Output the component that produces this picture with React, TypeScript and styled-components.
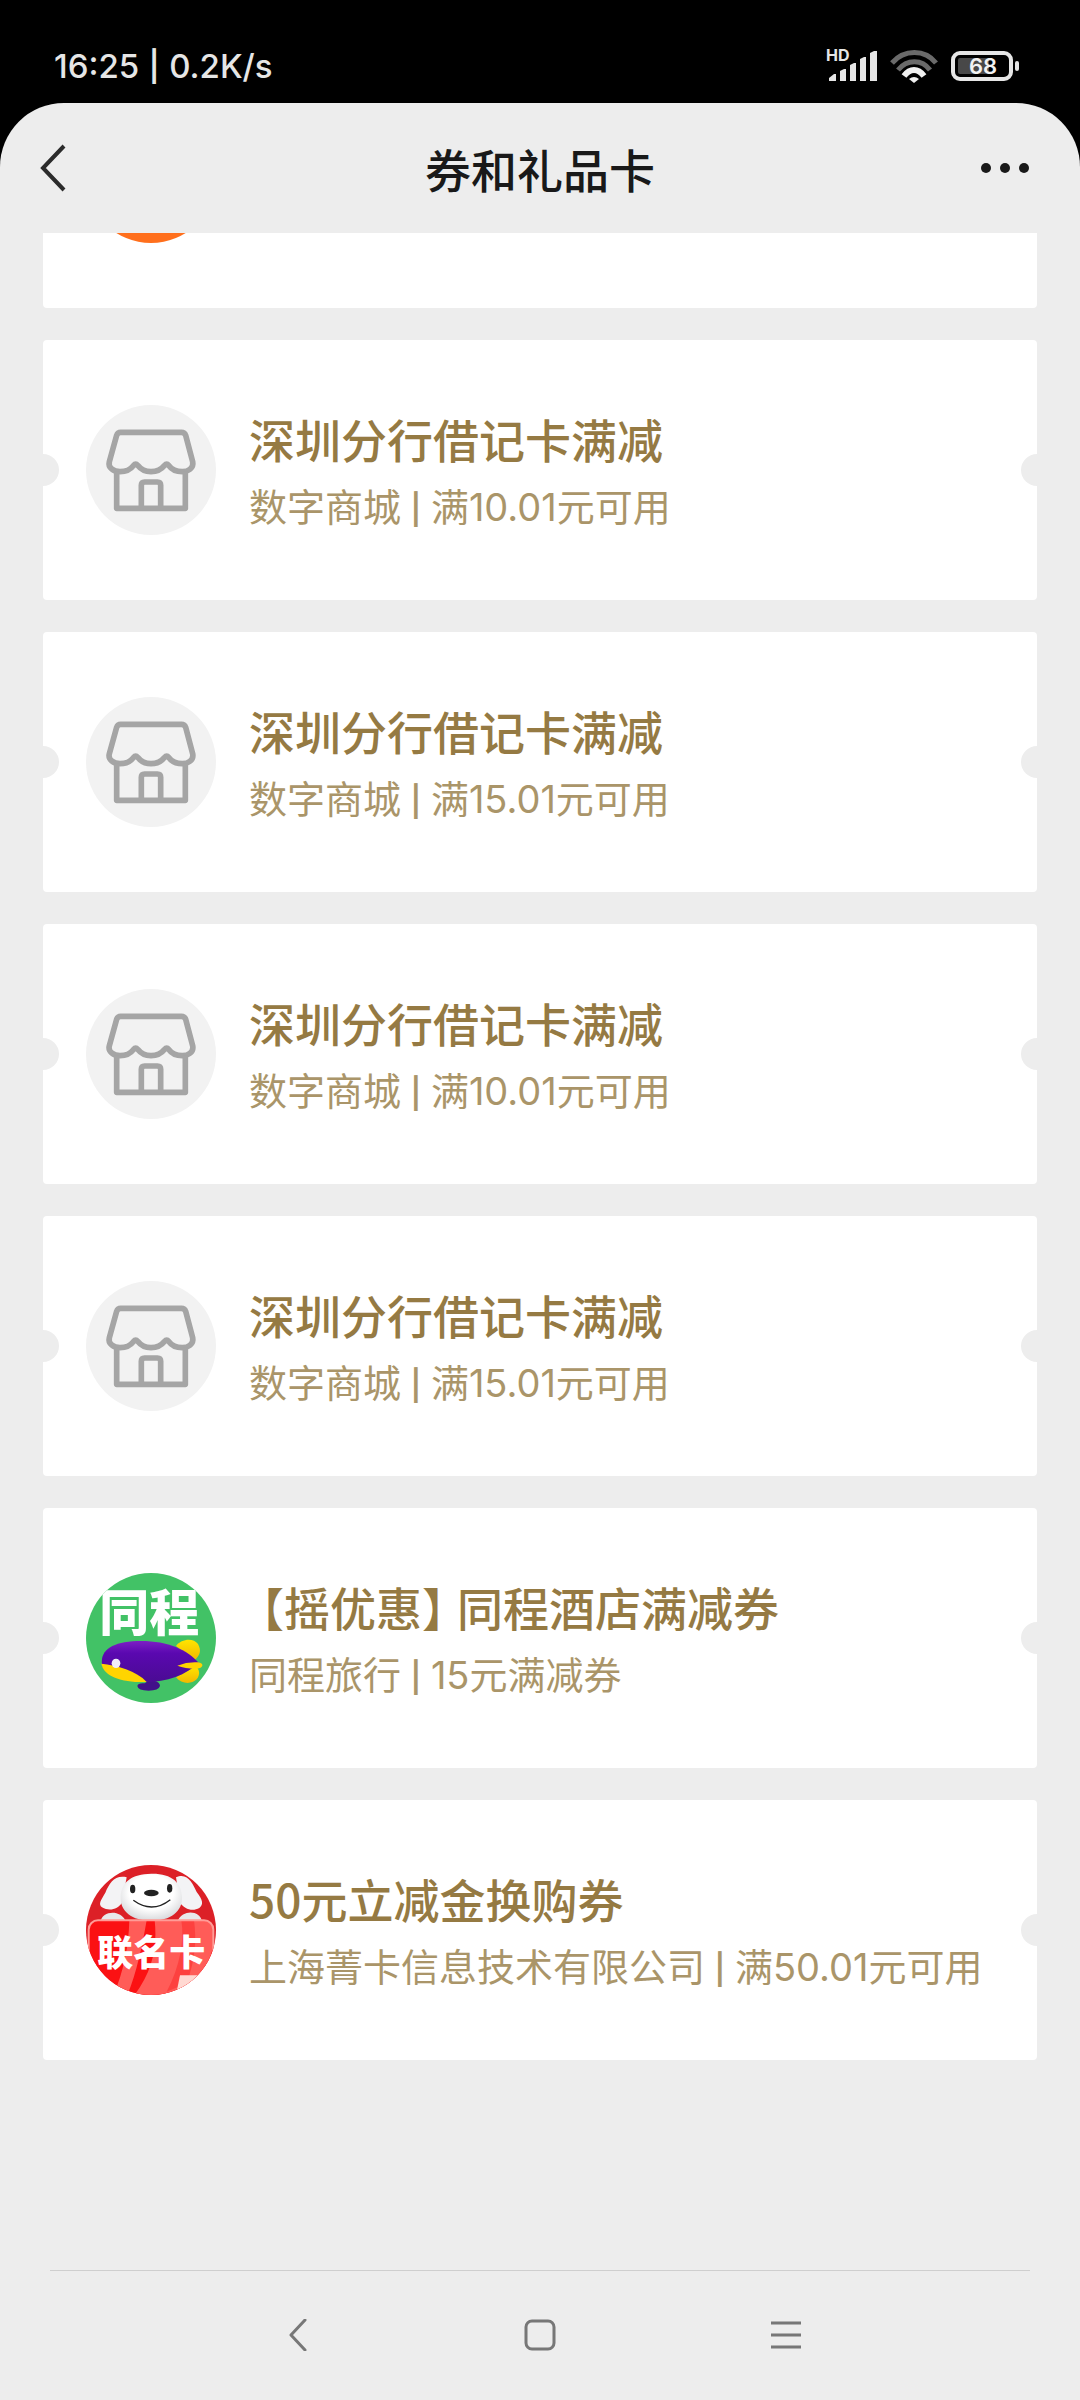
import React from "react";
import styled, { createGlobalStyle } from "styled-components";

const GlobalStyle = createGlobalStyle`
  * { box-sizing: border-box; }
  html, body { margin: 0; padding: 0; background: #000; }
  body { font-family: Inter, "Noto Sans CJK SC", sans-serif; }
  h1, h2, p, ul { margin: 0; padding: 0; }
  button { border: 0; padding: 0; background: none; font: inherit; color: inherit; cursor: pointer; }
`;

const Screen = styled.div`
  min-height: 100vh;
  display: flex;
  flex-direction: column;
  background: #000;
`;

const StatusBar = styled.div`
  height: 103px;
  padding: 29px 60px 0 54px;
  display: flex;
  align-items: center;
  justify-content: space-between;
  color: #e6e6e6;
  font-size: 33px;
  font-weight: 500;
`;

const StatusIcons = styled.div`
  display: flex;
  align-items: center;
  gap: 13px;
`;

const Pipe = styled.span`
  padding: 0 2px;
  font-size: 30px;
  font-weight: 600;
  vertical-align: 1px;
  white-space: pre;
`;

const Sheet = styled.div`
  flex: 1;
  display: flex;
  flex-direction: column;
  background: #ededed;
  border-radius: 64px 64px 0 0;
`;

const Header = styled.header`
  height: 130px;
  padding: 0 36px;
  display: grid;
  grid-template-columns: 100px 1fr 100px;
  align-items: center;
`;

const HeaderTitle = styled.h1`
  text-align: center;
  color: #191919;
  font-family: "Noto Sans CJK SC", sans-serif;
  font-size: 46px;
  line-height: 58px;
  font-weight: 500;
`;

const HeaderButton = styled.button<{ $end?: boolean }>`
  height: 64px;
  display: flex;
  align-items: center;
  justify-content: ${(p) => (p.$end ? "flex-end" : "flex-start")};
`;

const CardList = styled.ul`
  list-style: none;
  padding: 0 43px;
  display: flex;
  flex-direction: column;
  gap: 32px;
  overflow: hidden;
`;

const Card = styled.li<{ $scrolled?: boolean }>`
  position: relative;
  height: 260px;
  margin-top: ${(p) => (p.$scrolled ? "-185px" : "0")};
  padding: 0 43px;
  display: flex;
  align-items: center;
  gap: 33px;
  background: #fff;
  border-radius: 4px;
  overflow: hidden;
`;

const Notch = styled.span<{ $side: "left" | "right" }>`
  position: absolute;
  top: 114px;
  ${(p) => p.$side}: -16px;
  width: 32px;
  height: 32px;
  border-radius: 50%;
  background: #ededed;
`;

const Avatar = styled.div<{ $color: string }>`
  flex: none;
  width: 130px;
  height: 130px;
  border-radius: 50%;
  overflow: hidden;
  background: ${(p) => p.$color};
  svg { display: block; width: 100%; height: 100%; }
`;

const CardText = styled.div`
  padding-top: 2px;
  display: flex;
  flex-direction: column;
  gap: 16px;
  min-width: 0;
  white-space: nowrap;
`;

const CardTitle = styled.h2`
  color: #957a43;
  font-family: "Noto Sans CJK SC", sans-serif;
  font-size: 46px;
  line-height: 58px;
  font-weight: 500;
`;

const Tag = styled.span`
  padding: 0 12px;
  font-feature-settings: "halt";
`;

const CardNote = styled.p`
  color: #aa9569;
  font-size: 38px;
  line-height: 48px;
`;

const NavBar = styled.nav`
  height: 130px;
  margin: auto 50px 0;
  padding-bottom: 2px;
  border-top: 1px solid #cfcfcf;
  display: flex;
  justify-content: center;
  align-items: center;
  gap: 182px;
`;

const NavButton = styled.button`
  width: 64px;
  height: 64px;
  display: flex;
  align-items: center;
  justify-content: center;
`;

const SignalIcon = () => (
  <svg width="51" height="44" viewBox="826 45 51 44" fill="#e6e6e6">
    <text x="826" y="62" fontSize="16" fontWeight="700">HD</text>
    <path d="M829 79l5-4h2v7h-7z M840 72l4-2h2v12h-6z M850 66l4-2h2v18h-6z M860 60l4-2h2v24h-6z M870 54l4-2h3v30h-7z" />
  </svg>
);

const WifiIcon = () => (
  <svg width="48" height="34" viewBox="889 49 48 34" fill="none" strokeWidth="5">
    <path d="M891 63C903 49 924 49 935 63" stroke="#6a6a6a" />
    <path d="M897 70C906 59 921 59 929 70" stroke="#6a6a6a" />
    <path d="M903 76C909 68 917 68 923 76" stroke="#f0f0f0" strokeWidth="6" />
    <path d="M908 79q5-4 10 0l-5 4z" fill="#f0f0f0" />
  </svg>
);

const BatteryIcon = () => (
  <svg width="69" height="32" viewBox="951 50 69 32">
    <rect x="953" y="53" width="58" height="26" rx="7" fill="none" stroke="#e6e6e6" strokeWidth="4" />
    <rect x="958" y="58" width="31" height="16" rx="2" fill="#484848" />
    <rect x="1015" y="61" width="4" height="10" rx="2" fill="#e6e6e6" />
    <text x="983" y="74" textAnchor="middle" fontSize="22" fontWeight="600" fill="#f2f2f2">68</text>
  </svg>
);

const StoreLogo = () => (
  <svg viewBox="258 224 390 390" fill="none" stroke="#a5a5a5" strokeWidth="17" strokeLinejoin="round">
    <path d="M362 306H544Q554 306 557 315L578 394C582 414 564 424 547 424C526 424 513 415 506 405Q500 398 494 405C483 419 470 424 453 424C436 424 423 418 413 405Q407 398 401 405C392 417 380 424 360 424C342 424 323 413 328 394L350 315Q353 306 362 306Z" />
    <path d="M350 424V534H556V424M424 534V465Q424 455 434 455H472Q482 455 482 465V534" />
  </svg>
);

const AirshipLogo = () => (
  <svg viewBox="48 39 390 390">
    <defs>
      <linearGradient id="hull" x1="0" y1="0" x2="0" y2="1">
        <stop offset="0" stopColor="#7d1fc4" />
        <stop offset="0.3" stopColor="#5a08b0" />
        <stop offset="1" stopColor="#4a0b93" />
      </linearGradient>
      <linearGradient id="fin" x1="0" y1="0" x2="0" y2="1">
        <stop offset="0" stopColor="#ffe500" />
        <stop offset="1" stopColor="#f2b800" />
      </linearGradient>
    </defs>
    <text x="88" y="213" fontSize="150" fontWeight="900" fill="#fff">同程</text>
    <path d="M318 258C334 236 370 232 384 252C396 274 388 288 374 300Z" fill="url(#fin)" />
    <path d="M318 352C334 372 364 374 380 358C392 342 388 330 378 318Z" fill="url(#fin)" />
    <path d="M236 362H252Q270 366 270 378Q266 392 236 392Q204 392 202 378Q204 368 224 370Z" fill="#42108a" />
    <path d="M96 314C90 268 130 246 200 243C290 240 350 268 386 308C350 344 290 366 226 366C150 364 104 344 96 314Z" fill="url(#hull)" />
    <path d="M94 311C140 316 200 332 230 366C160 368 102 352 94 311Z" fill="#ffd400" />
    <path d="M322 317Q352 305 384 307Q398 309 397 317Q394 326 376 326Q346 326 322 317Z" fill="#ffd400" />
    <ellipse cx="138" cy="310" rx="13" ry="14" fill="#f1eef8" />
  </svg>
);

const DogLogo = () => (
  <svg viewBox="48 45 390 390">
    <defs>
      <radialGradient id="face" cx="0.5" cy="0.4" r="0.6">
        <stop offset="0.6" stopColor="#ffffff" />
        <stop offset="1" stopColor="#d9dadd" />
      </radialGradient>
    </defs>
    <path d="M170 82C134 74 118 100 106 128C92 152 84 162 96 172C120 186 144 176 156 158Z" fill="#f3f3f5" />
    <path d="M318 82C352 66 368 100 380 126C398 150 402 162 388 174C366 186 342 176 330 158Z" fill="#f3f3f5" />
    <path d="M92 214C96 184 150 176 168 214ZM322 214C340 176 390 182 396 214Z" fill="#e8e8ea" />
    <path d="M244 71C306 70 334 98 336 140C338 184 302 212 244 212C186 212 150 184 152 140C154 96 184 72 244 71Z" fill="url(#face)" />
    <ellipse cx="188" cy="117" rx="8" ry="13" fill="#222" />
    <ellipse cx="299" cy="115" rx="8" ry="13" fill="#222" />
    <ellipse cx="244" cy="129" rx="22" ry="10" fill="#222" />
    <path d="M190 151Q246 192 301 149" fill="none" stroke="#222" strokeWidth="4" />
    <rect x="56" y="211" width="374" height="240" rx="28" fill="#fb1113" />
    <path d="M178 211H230C216 290 200 370 170 440H128C160 370 176 290 178 211ZM254 211H402Q430 214 430 240V290L404 376C380 420 340 440 190 440C250 360 262 290 254 211Z" fill="#ff5c58" />
    <path d="M334 211C344 270 330 350 290 425L350 400C376 330 380 270 372 211Z" fill="#f91a1b" opacity="0.4" />
    <path d="M330 376H400L360 425H320Z" fill="#ffd9d2" />
    <rect x="56" y="211" width="374" height="240" rx="28" fill="none" stroke="#ff9c97" strokeWidth="6" />
    <text x="244" y="349" textAnchor="middle" fontSize="108" fontWeight="900" fill="#fff">联名卡</text>
  </svg>
);

type Coupon = {
  logo: "store" | "airship" | "dog";
  tag?: string;
  title: string;
  shop: string;
  rule: string;
};

const logos = {
  store: { color: "#f2f2f2", Art: StoreLogo },
  airship: { color: "#42c266", Art: AirshipLogo },
  dog: { color: "#dc2027", Art: DogLogo },
};

const coupons: Coupon[] = [
  { logo: "store", title: "深圳分行借记卡满减", shop: "数字商城", rule: "满10.01元可用" },
  { logo: "store", title: "深圳分行借记卡满减", shop: "数字商城", rule: "满15.01元可用" },
  { logo: "store", title: "深圳分行借记卡满减", shop: "数字商城", rule: "满10.01元可用" },
  { logo: "store", title: "深圳分行借记卡满减", shop: "数字商城", rule: "满15.01元可用" },
  { logo: "airship", tag: "【摇优惠】", title: "同程酒店满减券", shop: "同程旅行", rule: "15元满减券" },
  { logo: "dog", title: "50元立减金换购券", shop: "上海菁卡信息技术有限公司", rule: "满50.01元可用" },
];

const CouponCard = ({ coupon }: { coupon: Coupon }) => {
  const { color, Art } = logos[coupon.logo];
  return (
    <Card>
      <Notch $side="left" />
      <Notch $side="right" />
      <Avatar $color={color}>
        <Art />
      </Avatar>
      <CardText>
        <CardTitle>
          {coupon.tag && <Tag>{coupon.tag}</Tag>}
          {coupon.title}
        </CardTitle>
        <CardNote>
          {coupon.shop}
          <Pipe>{" | "}</Pipe>
          {coupon.rule}
        </CardNote>
      </CardText>
    </Card>
  );
};

export default function App() {
  return (
    <Screen>
      <GlobalStyle />
      <StatusBar>
        <span>
          16:25
          <Pipe>{" | "}</Pipe>
          0.2K/s
        </span>
        <StatusIcons>
          <SignalIcon />
          <WifiIcon />
          <BatteryIcon />
        </StatusIcons>
      </StatusBar>
      <Sheet>
        <Header>
          <HeaderButton aria-label="返回">
            <svg width="34" height="50" viewBox="36 143 34 50" fill="none" stroke="#2b2b2b" strokeWidth="4">
              <path d="M64 146L43 168L64 190" />
            </svg>
          </HeaderButton>
          <HeaderTitle>券和礼品卡</HeaderTitle>
          <HeaderButton $end aria-label="更多">
            <svg width="64" height="12" viewBox="980 162 64 12" fill="#191919">
              <circle cx="986" cy="168" r="5" />
              <circle cx="1005" cy="168" r="5" />
              <circle cx="1024" cy="168" r="5" />
            </svg>
          </HeaderButton>
        </Header>
        <CardList>
          <Card $scrolled>
            <Avatar $color="#ff6f1c" />
          </Card>
          {coupons.map((coupon, i) => (
            <CouponCard key={i} coupon={coupon} />
          ))}
        </CardList>
        <NavBar>
          <NavButton aria-label="返回">
            <svg width="32" height="32" viewBox="0 0 32 32" fill="none" stroke="#777" strokeWidth="3" strokeLinecap="round" strokeLinejoin="round">
              <path d="M27 1L13 16L27 31" />
            </svg>
          </NavButton>
          <NavButton aria-label="主页">
            <svg width="32" height="32" viewBox="0 0 32 32" fill="none" stroke="#777" strokeWidth="3">
              <rect x="2" y="2" width="28" height="28" rx="6" />
            </svg>
          </NavButton>
          <NavButton aria-label="菜单">
            <svg width="32" height="32" viewBox="0 0 32 32" stroke="#777" strokeWidth="3">
              <path d="M1 4H31M1 16H31M1 28H31" />
            </svg>
          </NavButton>
        </NavBar>
      </Sheet>
    </Screen>
  );
}
